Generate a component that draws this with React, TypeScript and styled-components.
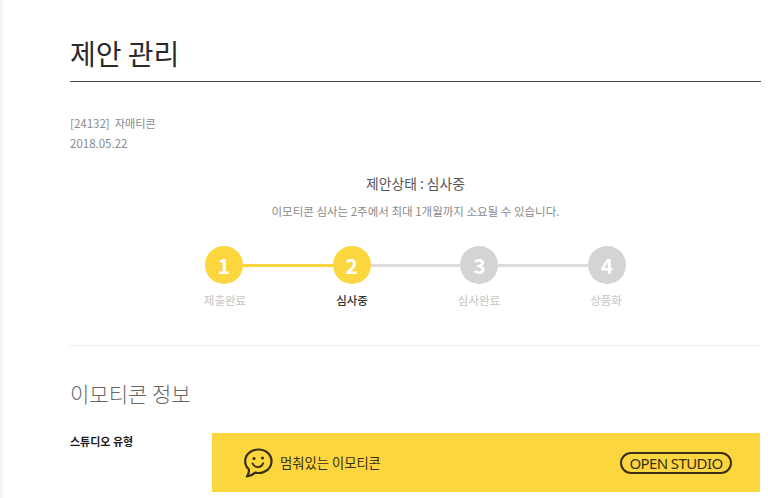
import React from "react";
import styled, { createGlobalStyle } from "styled-components";

type StepInfo = {
  number: number;
  label: string;
};

const steps: StepInfo[] = [
  { number: 1, label: "제출완료" },
  { number: 2, label: "심사중" },
  { number: 3, label: "심사완료" },
  { number: 4, label: "상품화" },
];

const currentStep = 2;

const App = () => {
  return (
    <Page>
      <GlobalStyle />
      <Content>
        <Title>제안 관리</Title>
        <Meta>
          <MetaLine>
            [24132]<MetaName>자매티콘</MetaName>
          </MetaLine>
          <MetaLine>2018.05.22</MetaLine>
        </Meta>
        <StatusSection>
          <StatusTitle>제안상태 : 심사중</StatusTitle>
          <StatusNote>이모티콘 심사는 2주에서 최대 1개월까지 소요될 수 있습니다.</StatusNote>
          <Track>
            {steps.map((step, index) => (
              <React.Fragment key={step.number}>
                {index > 0 && <Connector $active={step.number <= currentStep} />}
                <Circle $active={step.number <= currentStep}>{step.number}</Circle>
              </React.Fragment>
            ))}
          </Track>
          <Labels>
            {steps.map((step) => (
              <Label key={step.number} $current={step.number === currentStep}>
                {step.label}
              </Label>
            ))}
          </Labels>
        </StatusSection>
        <InfoSection>
          <SectionTitle>이모티콘 정보</SectionTitle>
          <InfoRow>
            <InfoLabel>스튜디오 유형</InfoLabel>
            <Banner>
              <BannerLeft>
                <BubbleIcon width="30" height="32" viewBox="0 0 30 32" fill="none">
                  <path
                    d="M15.5 2.5C8 2.5 2.2 7.6 2.2 14.2c0 3.2 1.4 6 3.6 8.1.5 2.6-.4 5.2-1.8 7.2 3.3-.4 6.2-2 8.1-3.9 1.1.3 2.2.4 3.4.4 7.3 0 13-5.2 13-11.8S22.8 2.5 15.5 2.5Z"
                    stroke="#3a2e12"
                    strokeWidth="2.2"
                    strokeLinejoin="round"
                  />
                  <circle cx="11" cy="11.5" r="1.5" fill="#3a2e12" />
                  <circle cx="19.5" cy="11" r="1.5" fill="#3a2e12" />
                  <path
                    d="M9.5 16.5c1.4 2.6 3.5 3.7 5.7 3.6 2.2-.1 4-1.5 5-3.8"
                    stroke="#3a2e12"
                    strokeWidth="1.8"
                    strokeLinecap="round"
                  />
                </BubbleIcon>
                <BannerText>멈춰있는 이모티콘</BannerText>
              </BannerLeft>
              <OpenStudio>OPEN STUDIO</OpenStudio>
            </Banner>
          </InfoRow>
        </InfoSection>
      </Content>
    </Page>
  );
};

const GlobalStyle = createGlobalStyle`
  html, body {
    margin: 0;
    padding: 0;
    background: #fff;
    overflow: hidden;
  }
  body {
    font-family: "Noto Sans CJK KR", "Noto Sans", sans-serif;
  }
`;

const Page = styled.div`
  width: 768px;
  height: 498px;
  overflow: hidden;
  box-sizing: border-box;
  border-left: 3px solid #f6f6f6;
  padding: 0 7px 0 67px;
`;

const Content = styled.div`
  display: flex;
  flex-direction: column;
`;

const Title = styled.h1`
  margin: 0;
  height: 82px;
  box-sizing: border-box;
  padding-top: 33px;
  border-bottom: 1px solid #4a4a4a;
  font-size: 28px;
  line-height: 40px;
  font-weight: 400;
  color: #2a2a2a;
`;

const Meta = styled.div`
  margin-top: 31px;
  display: flex;
  flex-direction: column;
`;

const MetaLine = styled.div`
  height: 20px;
  font-size: 11.5px;
  line-height: 20px;
  color: #8a8a8a;
`;

const MetaName = styled.span`
  margin-left: 5px;
  font-size: 11.2px;
`;

const StatusSection = styled.section`
  margin-top: 20px;
  height: 172px;
  border-bottom: 1px solid #ececec;
  display: flex;
  flex-direction: column;
  align-items: center;
`;

const StatusTitle = styled.div`
  font-size: 13.8px;
  line-height: 20px;
  color: #555;
`;

const StatusNote = styled.div`
  margin-top: 9px;
  font-size: 11.5px;
  line-height: 18px;
  color: #8a8a8a;
`;

const Track = styled.div`
  margin-top: 26px;
  width: 421px;
  display: flex;
  align-items: center;
`;

const Circle = styled.div<{ $active: boolean }>`
  width: 38px;
  height: 38px;
  flex: none;
  border-radius: 50%;
  background: ${({ $active }) => ($active ? "#fbd63f" : "#d4d4d4")};
  color: #fff;
  font-size: 21px;
  font-weight: 700;
  line-height: 38px;
  text-align: center;
`;

const Connector = styled.div<{ $active: boolean }>`
  flex: 1;
  height: 3px;
  background: ${({ $active }) => ($active ? "#fbd63f" : "#dcdcdc")};
`;

const Labels = styled.div`
  margin-top: 7px;
  width: 508px;
  display: grid;
  grid-template-columns: repeat(4, 127px);
`;

const Label = styled.div<{ $current: boolean }>`
  text-align: center;
  font-size: 11.5px;
  line-height: 18px;
  font-weight: 500;
  color: ${({ $current }) => ($current ? "#333" : "#cdcdcd")};
`;

const InfoSection = styled.section`
  display: flex;
  flex-direction: column;
`;

const SectionTitle = styled.h2`
  margin: 31px 0 0;
  font-size: 21px;
  line-height: 32px;
  font-weight: 300;
  color: #666;
`;

const InfoRow = styled.div`
  margin-top: 24px;
  display: flex;
  align-items: flex-start;
`;

const InfoLabel = styled.div`
  width: 142px;
  flex: none;
  margin-top: -1px;
  font-size: 11px;
  line-height: 18px;
  font-weight: 700;
  color: #1c1c1c;
`;

const Banner = styled.div`
  width: 548px;
  height: 59px;
  flex: none;
  box-sizing: border-box;
  padding: 0 28px 0 31px;
  background: #fbd63f;
  display: flex;
  align-items: center;
  justify-content: space-between;
`;

const BannerLeft = styled.div`
  display: flex;
  align-items: center;
  gap: 7px;
`;

const BubbleIcon = styled.svg`
  display: block;
`;

const BannerText = styled.span`
  font-size: 13.3px;
  line-height: 20px;
  color: #3a2e12;
`;

const OpenStudio = styled.span`
  box-sizing: border-box;
  width: 112px;
  height: 22px;
  border: 2px solid #3a2e12;
  border-radius: 11px;
  font-family: "Noto Sans", sans-serif;
  font-size: 15px;
  letter-spacing: -0.6px;
  line-height: 18px;
  text-align: center;
  color: #3a2e12;
  white-space: nowrap;
`;

export default App;
